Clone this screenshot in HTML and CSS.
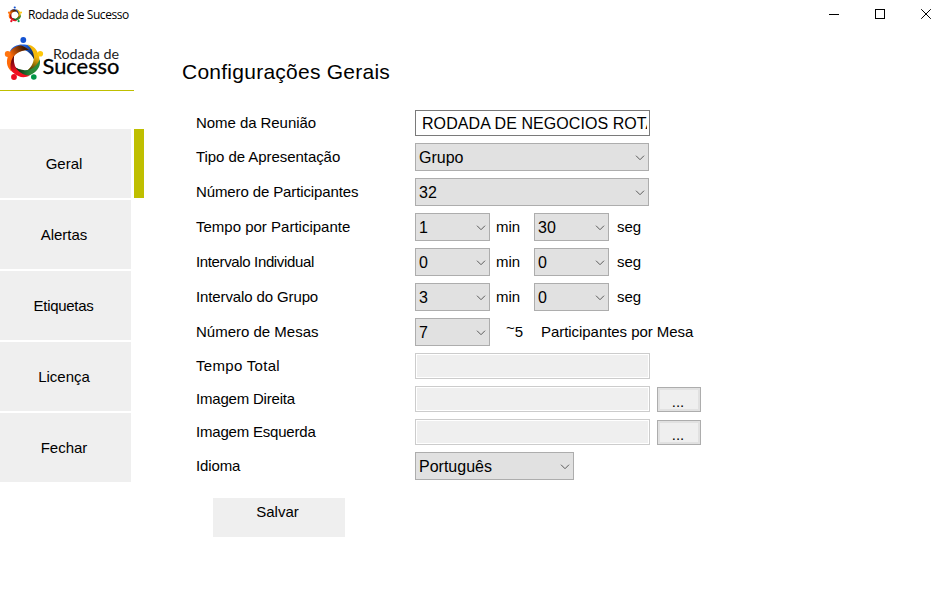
FILE: index.html
```html
<!DOCTYPE html>
<html lang="pt">
<head>
<meta charset="utf-8">
<title>Rodada de Sucesso</title>
<link rel="stylesheet" href="styles.css">
</head>
<body>
<svg class="defs" width="0" height="0" aria-hidden="true">
  <defs>
    <linearGradient id="shade" x1="0" y1="0" x2="1" y2=".6"><stop offset=".45" stop-color="#000" stop-opacity="0"/><stop offset="1" stop-color="#000" stop-opacity=".75"/></linearGradient>
    <path id="arm" d="M-14 -8.500C-11 -14.500 -6 -16.500 1 -16C6 -15.500 11 -13 13.500 -7C13.800 -4 13 -1 11.800 2C10 -4 6 -9 0 -11C-5 -12.300 -10 -11 -14 -8.500Z"/>
    <symbol id="ring" viewBox="0 0 40 46">
      <g transform="translate(19.500 24.500)">
        <g fill="#1c5fd8"><use href="#arm"/><use href="#arm" fill="url(#shade)"/></g>
        <g fill="#f5b80a" transform="rotate(72)"><use href="#arm"/><use href="#arm" fill="url(#shade)"/></g>
        <g fill="#2a8a38" transform="rotate(144)"><use href="#arm"/><use href="#arm" fill="url(#shade)"/></g>
        <g fill="#f01020" transform="rotate(216)"><use href="#arm"/><use href="#arm" fill="url(#shade)"/></g>
        <g fill="#ff6a08" transform="rotate(288)"><use href="#arm"/><use href="#arm" fill="url(#shade)"/></g>
      </g>
      <circle cx="19.300" cy="4" r="2.900" fill="#1453d2"/>
      <circle cx="36.300" cy="17.700" r="2.800" fill="#ffc80a"/>
      <circle cx="29.800" cy="41" r="2.800" fill="#009646"/>
      <circle cx="10" cy="41" r="2.900" fill="#eb0c22"/>
      <circle cx="3.700" cy="18" r="2.900" fill="#ff7510"/>
    </symbol>
    <symbol id="chevron" viewBox="0 0 10 6"><path fill="none" stroke="#5a5a5a" d="M1 .7L5 4.700L9 .7"/></symbol>
  </defs>
</svg>

<header class="titlebar">
  <svg class="app-icon"><use href="#ring"/></svg>
  <span class="app-name">Rodada de Sucesso</span>
  <div class="window-controls">
    <svg width="10" height="10" shape-rendering="crispEdges"><path d="M0 5h10v1H0z"/></svg>
    <svg width="10" height="10" shape-rendering="crispEdges"><path fill="none" stroke="#000" d="M.5 .5h9v9h-9z"/></svg>
    <svg width="10" height="10"><path stroke="#000" d="M.2 .2L9.800 9.800M9.800 .2L.2 9.800"/></svg>
  </div>
</header>

<div class="layout">
  <aside class="sidebar">
    <div class="brand">
      <svg class="brand-logo" width="134" height="60" viewBox="0 30 134 60">
        <use href="#ring" x="4" y="36" width="40" height="46"/>
        <text class="brand-top" x="53" y="58.500" textLength="66" lengthAdjust="spacingAndGlyphs">Rodada de</text>
        <text class="brand-bottom" x="42.500" y="74.300" textLength="77" lengthAdjust="spacingAndGlyphs">Sucesso</text>
      </svg>
    </div>
    <nav class="menu">
      <a class="menu-item active">Geral</a>
      <a class="menu-item">Alertas</a>
      <a class="menu-item tight">Etiquetas</a>
      <a class="menu-item">Licença</a>
      <a class="menu-item">Fechar</a>
    </nav>
  </aside>

  <main class="content">
    <h1>Configurações Gerais</h1>
    <form class="form">
      <div class="row"><label>Nome da Reunião</label><div class="textbox"><span>RODADA DE NEGOCIOS ROTARY</span></div></div>
      <div class="row"><label>Tipo de Apresentação</label><div class="combo wide">Grupo<svg><use href="#chevron"/></svg></div></div>
      <div class="row"><label class="tight">Número de Participantes</label><div class="combo wide">32<svg><use href="#chevron"/></svg></div></div>
      <div class="row"><label class="even">Tempo por Participante</label><div class="combo">1<svg><use href="#chevron"/></svg></div><span class="unit min">min</span><div class="combo">30<svg><use href="#chevron"/></svg></div><span class="unit seg">seg</span></div>
      <div class="row"><label class="tightest">Intervalo Individual</label><div class="combo">0<svg><use href="#chevron"/></svg></div><span class="unit min">min</span><div class="combo">0<svg><use href="#chevron"/></svg></div><span class="unit seg">seg</span></div>
      <div class="row"><label class="tight">Intervalo do Grupo</label><div class="combo">3<svg><use href="#chevron"/></svg></div><span class="unit min">min</span><div class="combo">0<svg><use href="#chevron"/></svg></div><span class="unit seg">seg</span></div>
      <div class="row"><label class="even">Número de Mesas</label><div class="combo">7<svg><use href="#chevron"/></svg></div><span class="unit approx"><span class="tilde">~</span>5</span><span class="unit people">Participantes por Mesa</span></div>
      <div class="row"><label class="loose">Tempo Total</label><div class="textbox disabled"></div></div>
      <div class="row"><label class="tighter">Imagem Direita</label><div class="textbox disabled"></div><button type="button" class="browse">...</button></div>
      <div class="row"><label class="tighter">Imagem Esquerda</label><div class="textbox disabled"></div><button type="button" class="browse">...</button></div>
      <div class="row"><label class="tight">Idioma</label><div class="combo medium">Português<svg><use href="#chevron"/></svg></div></div>
    </form>
    <button type="button" class="save">Salvar</button>
  </main>
</div>
</body>
</html>
```
FILE: styles.css
```css
* { box-sizing: border-box; }

body {
  margin: 0;
  height: 591px;
  overflow: hidden;
  background: #fff;
  color: #000;
  font: 15px/18px "Liberation Sans", Arial, sans-serif;
}

.defs { display: block; }

.titlebar {
  display: flex;
  align-items: center;
  height: 30px;
  padding: 0 18px 1px 7px;
}
.app-icon { width: 16px; height: 17px; }
.app-name {
  margin-left: 5px;
  font: 12px/16px "Open Sans", "Noto Sans", sans-serif;
  letter-spacing: -0.42px;
  white-space: nowrap;
}
.window-controls { display: flex; gap: 36px; margin: 0 0 1px auto; }
.window-controls svg { display: block; }

.layout { display: flex; }

.sidebar { width: 144px; flex: none; }
.brand { width: 134px; height: 61px; border-bottom: 1px solid #bfbf00; }
.brand-logo { display: block; }
.brand-top { font: 400 14px Lato, sans-serif; fill: #222; }
.brand-bottom { font: 400 22px Lato, sans-serif; stroke: #000; stroke-width: 0.3; }

.menu { display: flex; flex-direction: column; gap: 2px; margin-top: 38px; }
.menu-item {
  display: flex;
  align-items: center;
  justify-content: center;
  width: 131px;
  height: 69px;
  padding-right: 3px;
  background: #efefef;
}
.menu-item.active { box-shadow: 3px 0 #fff, 13px 0 #bfbf00; }
.menu-item.tight { padding-right: 4px; letter-spacing: -0.3px; }

.content { padding: 30px 0 0 38px; }
h1 {
  margin: 0;
  font-size: 21px;
  font-weight: 400;
  line-height: 24px;
  letter-spacing: 0.25px;
}

.form { display: flex; flex-direction: column; gap: 7px; margin: 26px 0 0 14px; }
.row { display: flex; align-items: center; }
.row label { width: 219px; white-space: nowrap; letter-spacing: -0.06px; }
.row label.loose { letter-spacing: 0.3px; }
.row label.even { letter-spacing: 0; }
.row label.tight { letter-spacing: -0.12px; }
.row label.tighter { letter-spacing: -0.2px; }
.row label.tightest { letter-spacing: -0.36px; }

.combo {
  display: flex;
  align-items: center;
  justify-content: space-between;
  width: 75px;
  height: 28px;
  padding: 1px 3px 0;
  border: 1px solid #adadad;
  background: #e1e1e1;
  font-size: 16px;
}
.combo svg { width: 10px; height: 6px; }
.combo.wide { width: 234px; }
.combo.medium { width: 159px; }

.textbox {
  width: 235px;
  height: 26px;
  padding: 0 2px 0 6px;
  border: 1px solid #7a7a7a;
  font-size: 16px;
  line-height: 25px;
  letter-spacing: 0.07px;
}
.textbox span { display: block; overflow: hidden; white-space: nowrap; }
.textbox.disabled {
  border-color: #ccc;
  background: #efefef;
  box-shadow: inset 0 0 0 1px #fff;
}

.unit { white-space: nowrap; }
.unit.min { width: 44px; padding-left: 6px; }
.unit.seg { padding-left: 8px; }
.unit.approx { width: 51px; padding-left: 16px; }
.unit.people { letter-spacing: -0.05px; }
.tilde { position: relative; top: -4px; }

button { font: inherit; color: inherit; }
.browse {
  width: 44px;
  height: 25px;
  margin: 1px 0 0 7px;
  padding: 4px 2px 0 0;
  border: 1px solid #adadad;
  background: #efefef;
  box-shadow: inset 0 0 0 2px #e1e1e1;
  line-height: 18px;
}

.save {
  display: block;
  width: 132px;
  height: 39px;
  margin: 18px 0 0 31px;
  padding: 0 3px 12px 0;
  border: 0;
  background: #efefef;
}
```
